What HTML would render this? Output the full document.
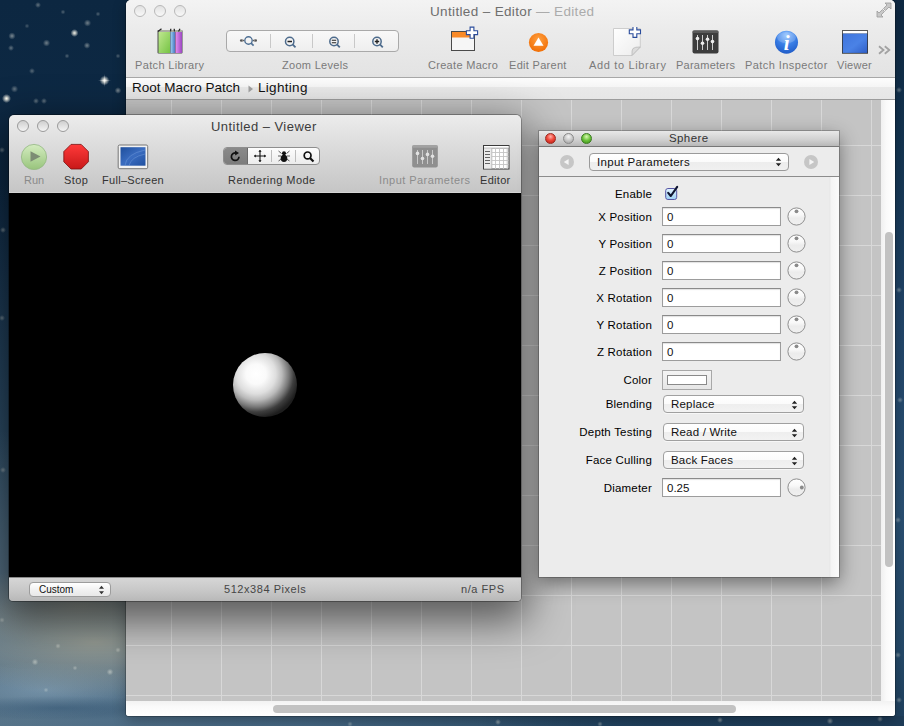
<!DOCTYPE html>
<html><head><meta charset="utf-8">
<style>
*{box-sizing:border-box;margin:0;padding:0}
html,body{width:904px;height:726px;overflow:hidden}
body{position:relative;font-family:"Liberation Sans",sans-serif;
background:#10263e;}
.abs{position:absolute}
#desk{left:0;top:0;width:904px;height:726px;overflow:hidden;
background:
 radial-gradient(ellipse 160px 55px at 95px 642px, rgba(150,155,146,.95), rgba(140,146,140,0) 100%),
 radial-gradient(ellipse 140px 40px at 80px 606px, rgba(140,146,142,.95), rgba(140,146,140,0) 100%),
 radial-gradient(ellipse 130px 12px at 60px 708px, rgba(48,82,112,.55), rgba(48,82,112,0) 100%),
 radial-gradient(ellipse 110px 28px at 45px 690px, rgba(125,155,178,.7), rgba(110,140,165,0) 100%),
 radial-gradient(ellipse 420px 120px at 280px 740px, rgba(72,106,134,1), rgba(60,95,125,0) 100%),
 radial-gradient(ellipse 320px 260px at 30px 690px, rgba(96,122,140,1) 0%, rgba(88,115,135,.95) 45%, rgba(60,92,118,0) 100%),
 radial-gradient(ellipse 70px 420px at -5px 600px, rgba(62,94,118,1), rgba(60,92,115,0) 100%),
 radial-gradient(ellipse 60px 500px at 910px 726px, rgba(52,88,120,1), rgba(50,85,115,0) 100%),
 linear-gradient(180deg,#0c2741 0%,#0e2a46 30%,#12304d 55%,#1b3c5a 80%,#22445f 100%);}
.st{position:absolute}
/* editor window */
#ed{left:126px;top:0px;width:769px;height:716px;background:#fdfdfd;border-radius:5px 5px 3px 3px;
 box-shadow:0 0 0 1px rgba(0,0,0,.22),0 4px 14px rgba(0,0,0,.3);overflow:hidden}
#edtb{left:0;top:0;width:769px;height:78px;background:linear-gradient(#f3f3f3,#ebebeb 40%,#e3e3e3);border-bottom:1px solid #a8a8a8}
#path{left:0;top:78px;width:769px;height:22px;background:linear-gradient(#fdfdfd 0,#f5f5f5 9px,#e9e9e9 9px,#e6e6e6 100%);border-bottom:1px solid #9c9c9c}
#grid{left:0;top:100px;width:755px;height:601px;background-color:#c4c4c4;
 background-image:linear-gradient(90deg,#d8d8d8 0,#d8d8d8 1px,transparent 1px),linear-gradient(180deg,#d8d8d8 0,#d8d8d8 1px,transparent 1px);
 background-size:50px 50px;background-position:45px 45px}
#vtrack{left:755px;top:100px;width:14px;height:601px;background:linear-gradient(90deg,#f0f0f0,#fafafa 40%,#ffffff)}
#vthumb{left:759px;top:232px;width:8px;height:335px;border-radius:4px;background:#c2c2c2}
#htrack{left:0;top:701px;width:769px;height:15px;background:linear-gradient(#f2f2f2,#fafafa 40%,#fff)}
#hthumb{left:147px;top:705px;width:463px;height:8px;border-radius:4px;background:#c2c2c2}
.tl{position:absolute;width:12px;height:12px;border-radius:50%;border:1px solid #b8b8b8;background:linear-gradient(#e2e2e2,#f8f8f8)}
.tl2{position:absolute;width:12px;height:12px;border-radius:50%;border:1px solid #9a9a9a;background:linear-gradient(#cfcfcf,#f4f4f4)}
.vlbl{position:absolute;font-size:11px;color:#333;white-space:nowrap;margin-top:1px}
.ptl{position:absolute;width:11px;height:11px;border-radius:50%;border:1px solid #888}
.plbl{position:absolute;margin-top:1px;right:187px;font-size:11.5px;color:#000;white-space:nowrap;letter-spacing:0.2px;text-align:right}
.tf{position:absolute;left:123px;width:119px;height:19px;border:1px solid #9c9c9c;border-top-color:#8a8a8a;background:#fff;box-shadow:inset 0 1px 1px rgba(0,0,0,.12)}
.tf span{position:absolute;left:4px;top:3px;font-size:11.5px;color:#111}
.pp{position:absolute;left:124px;width:141px;height:18px;border:1px solid #a0a0a0;border-radius:4px;background:linear-gradient(#ffffff,#fbfbfb 48%,#eeeeee 52%,#f2f2f2);box-shadow:0 1px 0 rgba(255,255,255,.6)}
.pp span{position:absolute;left:7px;top:2px;font-size:11.5px;color:#111;white-space:nowrap;letter-spacing:0.2px}
.lbl{position:absolute;font-size:11px;color:#7a7a7a;white-space:nowrap;margin-top:1px}
/* viewer window */
#vw{left:9px;top:115px;width:512px;height:486px;border-radius:5px 5px 4px 4px;overflow:hidden;
 box-shadow:0 0 0 1px rgba(0,0,0,.3),0 14px 40px 6px rgba(0,0,0,.55)}
#vwtb{left:0;top:0;width:512px;height:78px;background:linear-gradient(#ececec,#dcdcdc 40%,#c5c5c5);box-shadow:inset 0 -1px 0 #d4d4d4}
#canvas{left:0;top:78px;width:512px;height:384px;background:#000}
#vwbot{left:0;top:462px;width:512px;height:24px;background:linear-gradient(#d6d6d6,#c6c6c6 60%,#b8b8b8);border-top:1px solid #8a8a8a}
/* panel */
#pn{left:539px;top:131px;width:300px;height:446px;background:#ececec;
 box-shadow:0 0 0 1px rgba(0,0,0,.22),0 6px 18px rgba(0,0,0,.45)}
#pntb{left:0;top:0;width:300px;height:16px;background:linear-gradient(#e8e8e8,#cfcfcf 60%,#b8b8b8);border-bottom:1px solid #777}
#pnbar{left:0;top:16px;width:300px;height:30px;background:#ececec;border-bottom:1px solid #8c8c8c}
#pnscroll{left:290px;top:46px;width:10px;height:400px;background:linear-gradient(90deg,#e6e6e6,#f5f5f5 25%,#fbfbfb)}
</style></head><body>
<div id="desk" class="abs">
<div class="abs" style="left:895px;top:0;width:9px;height:726px;background:linear-gradient(#0e2842 0%,#143552 20%,#22466a 45%,#2a5073 70%,#254a6a 90%,#1f405e 100%)"></div>
<div class="abs" style="left:480px;top:716px;width:424px;height:10px;background:linear-gradient(90deg,rgba(35,62,88,0),#1f3f5c 40%,#1e3c58)"></div>
<div class="st" style="left:99.7px;top:75.7px;width:9.6px;height:9.6px;background:radial-gradient(circle,rgba(255,253,240,1.00) 0,rgba(255,253,240,0.85) 1.1px,rgba(255,253,240,0) 4.8px)"></div>
<div class="st" style="left:1.5px;top:93.9px;width:9.0px;height:9.0px;background:radial-gradient(circle,rgba(255,253,240,1.00) 0,rgba(255,253,240,0.85) 1.0px,rgba(255,253,240,0) 4.5px)"></div>
<div class="st" style="left:70.5px;top:29.1px;width:7.8px;height:7.8px;background:radial-gradient(circle,rgba(255,253,240,0.90) 0,rgba(255,253,240,0.77) 0.9px,rgba(255,253,240,0) 3.9px)"></div>
<div class="st" style="left:8.4px;top:32.4px;width:7.2px;height:7.2px;background:radial-gradient(circle,rgba(255,253,240,0.42) 0,rgba(255,253,240,0.36) 0.8px,rgba(255,253,240,0) 3.6px)"></div>
<div class="st" style="left:43.2px;top:39.4px;width:7.2px;height:7.2px;background:radial-gradient(circle,rgba(255,253,240,0.39) 0,rgba(255,253,240,0.33) 0.8px,rgba(255,253,240,0) 3.6px)"></div>
<div class="st" style="left:84.1px;top:19.4px;width:7.2px;height:7.2px;background:radial-gradient(circle,rgba(255,253,240,0.39) 0,rgba(255,253,240,0.33) 0.8px,rgba(255,253,240,0) 3.6px)"></div>
<div class="st" style="left:83.7px;top:42.2px;width:6.6px;height:6.6px;background:radial-gradient(circle,rgba(255,253,240,0.39) 0,rgba(255,253,240,0.33) 0.8px,rgba(255,253,240,0) 3.3px)"></div>
<div class="st" style="left:114.7px;top:87.3px;width:6.6px;height:6.6px;background:radial-gradient(circle,rgba(255,253,240,0.42) 0,rgba(255,253,240,0.36) 0.8px,rgba(255,253,240,0) 3.3px)"></div>
<div class="st" style="left:10.9px;top:85.4px;width:7.2px;height:7.2px;background:radial-gradient(circle,rgba(255,253,240,0.35) 0,rgba(255,253,240,0.29) 0.8px,rgba(255,253,240,0) 3.6px)"></div>
<div class="st" style="left:35.0px;top:2.0px;width:6.0px;height:6.0px;background:radial-gradient(circle,rgba(255,253,240,0.32) 0,rgba(255,253,240,0.27) 0.7px,rgba(255,253,240,0) 3.0px)"></div>
<div class="st" style="left:8.0px;top:45.0px;width:6.0px;height:6.0px;background:radial-gradient(circle,rgba(255,253,240,0.32) 0,rgba(255,253,240,0.27) 0.7px,rgba(255,253,240,0) 3.0px)"></div>
<div class="st" style="left:29.0px;top:68.0px;width:6.0px;height:6.0px;background:radial-gradient(circle,rgba(255,253,240,0.28) 0,rgba(255,253,240,0.24) 0.7px,rgba(255,253,240,0) 3.0px)"></div>
<div class="st" style="left:41.0px;top:97.5px;width:6.0px;height:6.0px;background:radial-gradient(circle,rgba(255,253,240,0.32) 0,rgba(255,253,240,0.27) 0.7px,rgba(255,253,240,0) 3.0px)"></div>
<div class="st" style="left:33.0px;top:97.5px;width:6.0px;height:6.0px;background:radial-gradient(circle,rgba(255,253,240,0.32) 0,rgba(255,253,240,0.27) 0.7px,rgba(255,253,240,0) 3.0px)"></div>
<div class="st" style="left:64.6px;top:53.6px;width:4.8px;height:4.8px;background:radial-gradient(circle,rgba(255,253,240,0.24) 0,rgba(255,253,240,0.21) 0.6px,rgba(255,253,240,0) 2.4px)"></div>
<div class="st" style="left:95.6px;top:11.6px;width:4.8px;height:4.8px;background:radial-gradient(circle,rgba(255,253,240,0.24) 0,rgba(255,253,240,0.21) 0.6px,rgba(255,253,240,0) 2.4px)"></div>
<div class="st" style="left:115.6px;top:53.6px;width:4.8px;height:4.8px;background:radial-gradient(circle,rgba(255,253,240,0.24) 0,rgba(255,253,240,0.21) 0.6px,rgba(255,253,240,0) 2.4px)"></div>
<div class="st" style="left:24.6px;top:23.6px;width:4.8px;height:4.8px;background:radial-gradient(circle,rgba(255,253,240,0.21) 0,rgba(255,253,240,0.18) 0.6px,rgba(255,253,240,0) 2.4px)"></div>
<div class="st" style="left:60.6px;top:9.6px;width:4.8px;height:4.8px;background:radial-gradient(circle,rgba(255,253,240,0.24) 0,rgba(255,253,240,0.21) 0.6px,rgba(255,253,240,0) 2.4px)"></div>
<div class="st" style="left:-1.0px;top:147.0px;width:6.0px;height:6.0px;background:radial-gradient(circle,rgba(255,253,240,0.32) 0,rgba(255,253,240,0.27) 0.7px,rgba(255,253,240,0) 3.0px)"></div>
<div class="st" style="left:0.0px;top:227.0px;width:6.0px;height:6.0px;background:radial-gradient(circle,rgba(255,253,240,0.35) 0,rgba(255,253,240,0.29) 0.7px,rgba(255,253,240,0) 3.0px)"></div>
<div class="st" style="left:-1.0px;top:315.0px;width:6.0px;height:6.0px;background:radial-gradient(circle,rgba(255,253,240,0.32) 0,rgba(255,253,240,0.27) 0.7px,rgba(255,253,240,0) 3.0px)"></div>
<div class="st" style="left:0.0px;top:467.0px;width:6.0px;height:6.0px;background:radial-gradient(circle,rgba(255,253,240,0.32) 0,rgba(255,253,240,0.27) 0.7px,rgba(255,253,240,0) 3.0px)"></div>
<div class="st" style="left:31.7px;top:658.7px;width:6.6px;height:6.6px;background:radial-gradient(circle,rgba(255,253,240,0.39) 0,rgba(255,253,240,0.33) 0.8px,rgba(255,253,240,0) 3.3px)"></div>
<div class="st" style="left:55.3px;top:643.3px;width:5.4px;height:5.4px;background:radial-gradient(circle,rgba(255,253,240,0.32) 0,rgba(255,253,240,0.27) 0.6px,rgba(255,253,240,0) 2.7px)"></div>
<div class="st" style="left:106.7px;top:668.7px;width:6.6px;height:6.6px;background:radial-gradient(circle,rgba(255,253,240,0.39) 0,rgba(255,253,240,0.33) 0.8px,rgba(255,253,240,0) 3.3px)"></div>
<div class="st" style="left:115.3px;top:647.3px;width:5.4px;height:5.4px;background:radial-gradient(circle,rgba(255,253,240,0.32) 0,rgba(255,253,240,0.27) 0.6px,rgba(255,253,240,0) 2.7px)"></div>
<div class="st" style="left:72.6px;top:665.6px;width:4.8px;height:4.8px;background:radial-gradient(circle,rgba(255,253,240,0.28) 0,rgba(255,253,240,0.24) 0.6px,rgba(255,253,240,0) 2.4px)"></div>
<div class="st" style="left:43.6px;top:687.6px;width:4.8px;height:4.8px;background:radial-gradient(circle,rgba(255,253,240,0.24) 0,rgba(255,253,240,0.21) 0.6px,rgba(255,253,240,0) 2.4px)"></div>
<div class="st" style="left:-0.7px;top:617.3px;width:5.4px;height:5.4px;background:radial-gradient(circle,rgba(255,253,240,0.28) 0,rgba(255,253,240,0.24) 0.6px,rgba(255,253,240,0) 2.7px)"></div>
<div class="st" style="left:896.0px;top:87.0px;width:6.0px;height:6.0px;background:radial-gradient(circle,rgba(255,253,240,0.32) 0,rgba(255,253,240,0.27) 0.7px,rgba(255,253,240,0) 3.0px)"></div>
<div class="st" style="left:896.0px;top:287.0px;width:6.0px;height:6.0px;background:radial-gradient(circle,rgba(255,253,240,0.32) 0,rgba(255,253,240,0.27) 0.7px,rgba(255,253,240,0) 3.0px)"></div>
<div class="st" style="left:897.0px;top:397.0px;width:6.0px;height:6.0px;background:radial-gradient(circle,rgba(255,253,240,0.32) 0,rgba(255,253,240,0.27) 0.7px,rgba(255,253,240,0) 3.0px)"></div>
<div class="st" style="left:895.0px;top:517.0px;width:6.0px;height:6.0px;background:radial-gradient(circle,rgba(255,253,240,0.32) 0,rgba(255,253,240,0.27) 0.7px,rgba(255,253,240,0) 3.0px)"></div>
<div class="st" style="left:895.0px;top:652.0px;width:6.0px;height:6.0px;background:radial-gradient(circle,rgba(255,253,240,0.32) 0,rgba(255,253,240,0.27) 0.7px,rgba(255,253,240,0) 3.0px)"></div>
<div class="st" style="left:896.0px;top:697.0px;width:6.0px;height:6.0px;background:radial-gradient(circle,rgba(255,253,240,0.32) 0,rgba(255,253,240,0.27) 0.7px,rgba(255,253,240,0) 3.0px)"></div>
<div class="st" style="left:495.0px;top:719.0px;width:6.0px;height:6.0px;background:radial-gradient(circle,rgba(255,253,240,0.39) 0,rgba(255,253,240,0.33) 0.7px,rgba(255,253,240,0) 3.0px)"></div>
<div class="st" style="left:717.0px;top:717.0px;width:6.0px;height:6.0px;background:radial-gradient(circle,rgba(255,253,240,0.39) 0,rgba(255,253,240,0.33) 0.7px,rgba(255,253,240,0) 3.0px)"></div>
<div class="st" style="left:826.7px;top:717.7px;width:6.6px;height:6.6px;background:radial-gradient(circle,rgba(255,253,240,0.39) 0,rgba(255,253,240,0.33) 0.8px,rgba(255,253,240,0) 3.3px)"></div>
<div class="st" style="left:877.0px;top:716.0px;width:6.0px;height:6.0px;background:radial-gradient(circle,rgba(255,253,240,0.35) 0,rgba(255,253,240,0.29) 0.7px,rgba(255,253,240,0) 3.0px)"></div>
<div class="st" style="left:597.3px;top:721.3px;width:5.4px;height:5.4px;background:radial-gradient(circle,rgba(255,253,240,0.32) 0,rgba(255,253,240,0.27) 0.6px,rgba(255,253,240,0) 2.7px)"></div>
<div class="st" style="left:347.3px;top:721.3px;width:5.4px;height:5.4px;background:radial-gradient(circle,rgba(255,253,240,0.28) 0,rgba(255,253,240,0.24) 0.6px,rgba(255,253,240,0) 2.7px)"></div>
<div class="abs" style="left:98px;top:80px;width:13px;height:1px;background:linear-gradient(90deg,rgba(255,255,255,0),rgba(255,255,255,.55),rgba(255,255,255,0))"></div><div class="abs" style="left:104px;top:74px;width:1px;height:13px;background:linear-gradient(rgba(255,255,255,0),rgba(255,255,255,.55),rgba(255,255,255,0))"></div>
</div>

<div id="ed" class="abs">
  <div id="edtb" class="abs">
    <div class="tl" style="left:8px;top:5px"></div>
    <div class="tl" style="left:28px;top:5px"></div>
    <div class="tl" style="left:48px;top:5px"></div>
    <div class="abs" style="left:304px;top:4px;font-size:13.5px;color:#6e6e6e;white-space:nowrap;letter-spacing:0.35px">Untitled &ndash; Editor <span style="color:#ababab">&mdash; Edited</span></div>
    <svg class="abs" style="left:750px;top:2px" width="16" height="16" viewBox="0 0 16 16"><g fill="#c8c8c8" stroke="#9a9a9a" stroke-width="0.8"><path d="M15 1 L9 1 L11 3 L7.5 6.5 L9.5 8.5 L13 5 L15 7 Z"/><path d="M1 15 L7 15 L5 13 L8.5 9.5 L6.5 7.5 L3 11 L1 9 Z"/></g></svg>
    <!-- Patch Library -->
    <svg class="abs" style="left:30px;top:28px" width="28" height="27" viewBox="0 0 28 27">
      <defs><linearGradient id="gG" x1="0" x2="1" y1="0" y2="1"><stop offset="0" stop-color="#c0e890"/><stop offset="1" stop-color="#76c444"/></linearGradient>
      <linearGradient id="gB" x1="0" x2="1"><stop offset="0" stop-color="#9cd0f4"/><stop offset="1" stop-color="#4a78c0"/></linearGradient>
      <linearGradient id="gP" x1="0" x2="1"><stop offset="0" stop-color="#e890f0"/><stop offset="1" stop-color="#9a48c0"/></linearGradient></defs>
      <rect x="1.5" y="2" width="25" height="23.5" fill="#4a4a4a" rx="1"/>
      <rect x="2.5" y="2.2" width="23.5" height="1.6" fill="#c4c6b8"/>
      <path d="M2 3.5 L5.5 0.8 M14.5 3.5 L14.8 0.8 M18.5 3.5 L18.2 0.8 M22.5 3.5 L24 0.8" stroke="#2a2a2a" stroke-width="1.3"/>
      <rect x="2.5" y="4" width="11.5" height="21" fill="url(#gG)"/>
      <rect x="14.5" y="4" width="4.5" height="21" fill="url(#gB)"/>
      <rect x="19.5" y="4" width="6.5" height="21" fill="url(#gP)"/>
    </svg>
    <div class="lbl" style="left:9px;top:58px;letter-spacing:0.35px">Patch Library</div>
    <!-- zoom segmented -->
    <div class="abs" style="left:100px;top:30px;width:173px;height:22px;border:1px solid #a9a9a9;border-radius:4px;background:linear-gradient(#f8f8f8,#eeeeee)">
      <div class="abs" style="left:43px;top:3px;width:1px;height:14px;background:#c8c8c8"></div>
      <div class="abs" style="left:85px;top:3px;width:1px;height:14px;background:#c8c8c8"></div>
      <div class="abs" style="left:127px;top:3px;width:1px;height:14px;background:#c8c8c8"></div>
      <svg class="abs" style="left:11px;top:2px" width="22" height="16" viewBox="0 0 22 16"><circle cx="10.5" cy="7.5" r="3.7" fill="none" stroke="#4f7094" stroke-width="1.4"/><path d="M13.1 10.1 L15.6 12.6" stroke="#4f7094" stroke-width="1.7"/><circle cx="3.2" cy="7.5" r="1.2" fill="#555"/><circle cx="17.8" cy="7.5" r="1.2" fill="#555"/><path d="M4.5 6 L6.3 7.5 L4.5 9 Z M16.5 6 L14.7 7.5 L16.5 9 Z" fill="#555"/></svg>
      <svg class="abs" style="left:54px;top:3px" width="22" height="16" viewBox="0 0 22 16"><circle cx="8.7" cy="7.5" r="4.2" fill="none" stroke="#4d6b8c" stroke-width="1.5"/><path d="M11.6 10.4 L14.5 13.3" stroke="#4d6b8c" stroke-width="1.8"/><path d="M6.5 7.5 L11 7.5" stroke="#222" stroke-width="1.5"/></svg>
      <svg class="abs" style="left:98px;top:3px" width="22" height="16" viewBox="0 0 22 16"><circle cx="9" cy="7.5" r="4.2" fill="none" stroke="#4d6b8c" stroke-width="1.5"/><path d="M11.9 10.4 L14.8 13.3" stroke="#4d6b8c" stroke-width="1.8"/><path d="M6.8 6.3 L11.2 6.3 M6.8 8.7 L11.2 8.7" stroke="#222" stroke-width="1.1"/></svg>
      <svg class="abs" style="left:141px;top:3px" width="22" height="16" viewBox="0 0 22 16"><circle cx="9" cy="7.5" r="4.2" fill="none" stroke="#4d6b8c" stroke-width="1.5"/><path d="M11.9 10.4 L14.8 13.3" stroke="#4d6b8c" stroke-width="1.8"/><path d="M6.8 7.5 L11.2 7.5 M9 5.3 L9 9.7" stroke="#222" stroke-width="1.4"/></svg>
    </div>
    <div class="lbl" style="left:156px;top:58px;letter-spacing:0.3px">Zoom Levels</div>
    <!-- Create Macro -->
    <svg class="abs" style="left:324px;top:26px" width="30" height="26" viewBox="0 0 30 26">
      <rect x="1.5" y="5.5" width="23" height="19" fill="#f6f6f6" stroke="#4a4a4a" stroke-width="1"/>
      <rect x="2" y="6" width="22" height="5.5" fill="#f98a28"/>
      <path d="M20.10 1.10 h3.80 v3.70 h3.70 v3.80 h-3.70 v3.70 h-3.80 v-3.70 h-3.70 v-3.80 h3.70 z" fill="#fff" stroke="#2a4c9c" stroke-width="1.1"/>
    </svg>
    <div class="lbl" style="left:302px;top:58px;letter-spacing:0.3px">Create Macro</div>
    <!-- Edit Parent -->
    <svg class="abs" style="left:401px;top:32px" width="22" height="22" viewBox="0 0 22 22">
      <defs><radialGradient id="gO" cx="0.5" cy="0.35" r="0.7"><stop offset="0" stop-color="#ffa040"/><stop offset="1" stop-color="#f06a00"/></radialGradient></defs>
      <circle cx="11.5" cy="10.5" r="9.6" fill="url(#gO)"/>
      <path d="M11.5 5.5 L16.5 13.8 L6.5 13.8 Z" fill="#fff"/>
    </svg>
    <div class="lbl" style="left:383px;top:58px;letter-spacing:0.3px">Edit Parent</div>
    <!-- Add to Library -->
    <svg class="abs" style="left:486px;top:27px" width="30" height="30" viewBox="0 0 30 30">
      <defs><linearGradient id="gPg" x1="0" y1="0" x2="1" y2="1"><stop offset="0" stop-color="#ffffff"/><stop offset="1" stop-color="#ececec"/></linearGradient></defs>
      <path d="M1.5 1.5 L28.3 1.5 L28.3 20 L20 28.5 L1.5 28.5 Z" fill="url(#gPg)" stroke="#cdcdcd" stroke-width="1"/>
      <path d="M28.3 20 L20 28.5 Q19.6 23 21 21.5 Q23 19.8 28.3 20 Z" fill="#dcdcdc" stroke="#b8b8b8" stroke-width="0.8"/>
      <path d="M21.00 -0.80 h3.80 v3.70 h3.70 v3.80 h-3.70 v3.70 h-3.80 v-3.70 h-3.70 v-3.80 h3.70 z" fill="#fff" stroke="#2a4c9c" stroke-width="1.1"/>
    </svg>
    <div class="lbl" style="left:463px;top:58px;letter-spacing:0.65px">Add to Library</div>
    <!-- Parameters -->
    <svg class="abs" style="left:566px;top:30px" width="27" height="24" viewBox="0 0 27 24">
      <rect x="0.5" y="0.5" width="26" height="23" rx="2" fill="#3d3d3d"/>
      <rect x="0.5" y="0.5" width="26" height="2.5" rx="1" fill="#5a5a5a"/>
      <path d="M5.5 5 V20 M10.5 5 V20 M15.5 5 V20 M20.5 5 V20" stroke="#cfcfcf" stroke-width="1"/>
      <circle cx="5.5" cy="8.6" r="1.8" fill="#eee"/><circle cx="10.5" cy="13.2" r="1.8" fill="#eee"/><circle cx="15.5" cy="9.3" r="1.8" fill="#eee"/><circle cx="20.5" cy="11.6" r="1.8" fill="#eee"/>
    </svg>
    <div class="lbl" style="left:550px;top:58px;letter-spacing:0.25px">Parameters</div>
    <!-- Patch Inspector -->
    <svg class="abs" style="left:648px;top:30px" width="25" height="26" viewBox="0 0 25 26">
      <defs><radialGradient id="gI" cx="0.5" cy="0.2" r="0.85"><stop offset="0" stop-color="#8ec0ff"/><stop offset="0.5" stop-color="#3a7fe6"/><stop offset="1" stop-color="#1d58c4"/></radialGradient></defs>
      <circle cx="12.5" cy="12.2" r="11.5" fill="url(#gI)"/>
      <ellipse cx="12.5" cy="7.5" rx="9.5" ry="5.5" fill="#fff" opacity="0.18"/>
      <text x="12.6" y="19.6" text-anchor="middle" font-family="Liberation Serif" font-style="italic" font-weight="bold" font-size="21" fill="#fff">i</text>
    </svg>
    <div class="lbl" style="left:619px;top:58px;letter-spacing:0.42px">Patch Inspector</div>
    <!-- Viewer -->
    <svg class="abs" style="left:715px;top:29px" width="28" height="26" viewBox="0 0 28 26">
      <defs><linearGradient id="gV" x1="0" y1="0" x2="1" y2="1"><stop offset="0" stop-color="#3f74dc"/><stop offset="0.55" stop-color="#4a82e6"/><stop offset="1" stop-color="#2f5fc8"/></linearGradient></defs>
      <rect x="1" y="1.2" width="26" height="23.5" fill="#333"/>
      <rect x="1.8" y="2" width="24.4" height="2.6" fill="#fff"/>
      <rect x="1.8" y="4.6" width="24.4" height="19.3" fill="url(#gV)"/>
    </svg>
    <div class="lbl" style="left:711px;top:58px;letter-spacing:0.25px">Viewer</div>
    <svg class="abs" style="left:752px;top:45px" width="14" height="11" viewBox="0 0 14 11"><path d="M1 1.2 L5.5 5 L1 8.8 M6.8 1.2 L11.3 5 L6.8 8.8" fill="none" stroke="#a2a2a2" stroke-width="1.8"/></svg>
  </div>
  <div id="path" class="abs">
    <div class="abs" style="left:6px;top:2px;font-size:13.5px;color:#111;white-space:nowrap;letter-spacing:0px">Root Macro Patch</div>
    <svg class="abs" style="left:121px;top:6px" width="8" height="10" viewBox="0 0 8 10"><path d="M1.5 1.5 L6 5 L1.5 8.5 Z" fill="#a0a0a0"/></svg>
    <div class="abs" style="left:132px;top:2px;font-size:13.5px;color:#111;white-space:nowrap;letter-spacing:0.3px">Lighting</div>
  </div>
  <div id="grid" class="abs"></div>
  <div id="vtrack" class="abs"></div>
  <div id="vthumb" class="abs"></div>
  <div id="htrack" class="abs"></div>
  <div id="hthumb" class="abs"></div>
</div>

<div id="vw" class="abs">
  <div id="vwtb" class="abs">
    <div class="tl2" style="left:8px;top:5px"></div>
    <div class="tl2" style="left:28px;top:5px"></div>
    <div class="tl2" style="left:48px;top:5px"></div>
    <div class="abs" style="left:202px;top:4px;font-size:13px;color:#3c3c3c;white-space:nowrap;letter-spacing:0.45px">Untitled &ndash; Viewer</div>
    <!-- Run -->
    <svg class="abs" style="left:11px;top:28px" width="28" height="28" viewBox="0 0 28 28">
      <defs><linearGradient id="gR" x1="0" y1="0" x2="0" y2="1"><stop offset="0" stop-color="#d4ecc0"/><stop offset="1" stop-color="#98c47c"/></linearGradient></defs>
      <circle cx="14" cy="14" r="12.6" fill="url(#gR)" stroke="#94b884" stroke-width="0.8"/>
      <path d="M10.5 8.2 L20.5 13.5 L10.5 18.8 Z" fill="#7c8c74"/>
    </svg>
    <div class="abs vlbl" style="left:15px;top:58px;color:#8a8a8a">Run</div>
    <!-- Stop -->
    <svg class="abs" style="left:53px;top:28px" width="28" height="28" viewBox="0 0 28 28">
      <defs><linearGradient id="gS" x1="0" y1="0" x2="0" y2="1"><stop offset="0" stop-color="#ff3a3a"/><stop offset="1" stop-color="#c81818"/></linearGradient></defs>
      <path d="M9 1.4 L19.2 1.4 L26.4 8.6 L26.4 18.8 L19.2 26 L9 26 L1.8 18.8 L1.8 8.6 Z" fill="url(#gS)" stroke="#7a1010" stroke-width="0.8"/>
    </svg>
    <div class="abs vlbl" style="left:55px;top:58px;letter-spacing:0.4px">Stop</div>
    <!-- Full-screen -->
    <svg class="abs" style="left:108px;top:29px" width="32" height="26" viewBox="0 0 32 26">
      <defs><linearGradient id="gF" x1="0" y1="0" x2="1" y2="1"><stop offset="0" stop-color="#1f4f9c"/><stop offset="0.5" stop-color="#3a6cc0"/><stop offset="1" stop-color="#2050a0"/></linearGradient></defs>
      <rect x="1.2" y="1" width="29.5" height="23.7" rx="1.5" fill="#f2f2f2" stroke="#6a6a6a" stroke-width="0.9"/>
      <rect x="3.5" y="3.2" width="25" height="18.5" fill="url(#gF)"/>
      <path d="M8 21.5 Q9 10 28 6 M12 21.5 Q14 13 28 10" stroke="#7aa4e0" stroke-width="0.6" fill="none" opacity="0.7"/>
    </svg>
    <div class="abs vlbl" style="left:93px;top:58px;letter-spacing:0.3px">Full&#8211;Screen</div>
    <!-- rendering mode -->
    <div class="abs" style="left:214px;top:32px;width:97px;height:18px;border:1px solid #8e8e8e;border-radius:4px;background:linear-gradient(#fdfdfd,#ececec);overflow:hidden">
      <div class="abs" style="left:0;top:0;width:24px;height:16px;background:linear-gradient(#8a8a8a,#7c7c7c);border-right:1px solid #6a6a6a"></div>
      <div class="abs" style="left:47px;top:2px;width:1px;height:12px;background:#bdbdbd"></div>
      <div class="abs" style="left:71px;top:2px;width:1px;height:12px;background:#bdbdbd"></div>
      <svg class="abs" style="left:5px;top:2px" width="13" height="13" viewBox="0 0 13 13"><path d="M10 6.8 A3.8 3.8 0 1 1 7.2 3" fill="none" stroke="#111" stroke-width="1.7"/><path d="M6 0.6 L10 3 L6.2 5.6 Z" fill="#111"/></svg>
      <svg class="abs" style="left:29px;top:1px" width="14" height="14" viewBox="0 0 14 14"><path d="M7 1.5 V12.5 M1.5 7 H12.5" stroke="#111" stroke-width="1.1"/><path d="M7 0.8 L8.6 2.8 H5.4 Z M7 13.2 L8.6 11.2 H5.4 Z M0.8 7 L2.8 5.4 V8.6 Z M13.2 7 L11.2 5.4 V8.6 Z" fill="#111"/></svg>
      <svg class="abs" style="left:53px;top:1px" width="14" height="14" viewBox="0 0 14 14"><ellipse cx="7" cy="9.3" rx="3.3" ry="3.6" fill="#111"/><circle cx="7" cy="4.3" r="2" fill="#111"/><path d="M1.5 2 L4.5 4.5 M12.5 2 L9.5 4.5 M1 7 H4 M13 7 H10 M1.5 12 L4.3 10 M12.5 12 L9.7 10" stroke="#333" stroke-width="0.8"/></svg>
      <svg class="abs" style="left:78px;top:2px" width="14" height="13" viewBox="0 0 14 13"><circle cx="5.6" cy="5.4" r="3.4" fill="none" stroke="#111" stroke-width="1.7"/><path d="M8 8 L11.5 11.5" stroke="#111" stroke-width="2.2"/></svg>
    </div>
    <div class="abs vlbl" style="left:219px;top:58px;letter-spacing:0.45px">Rendering Mode</div>
    <!-- Input Parameters disabled -->
    <svg class="abs" style="left:403px;top:30px" width="26" height="23" viewBox="0 0 26 23">
      <rect x="0.2" y="0.2" width="25.6" height="22.4" rx="2" fill="#8f8f8f"/>
      <rect x="0.2" y="0.2" width="25.6" height="2.5" rx="1" fill="#a2a2a2"/>
      <path d="M5.5 5 V19 M10.5 5 V19 M15.5 5 V19 M20.5 5 V19" stroke="#c9c9c9" stroke-width="1"/>
      <circle cx="5.5" cy="8.4" r="1.8" fill="#e2e2e2"/><circle cx="10.5" cy="13.5" r="1.8" fill="#e2e2e2"/><circle cx="15.5" cy="9.4" r="1.8" fill="#e2e2e2"/><circle cx="20.5" cy="11.2" r="1.8" fill="#e2e2e2"/>
    </svg>
    <div class="abs vlbl" style="left:370px;top:58px;color:#8c8c8c;letter-spacing:0.45px">Input Parameters</div>
    <!-- Editor icon -->
    <svg class="abs" style="left:474px;top:30px" width="27" height="25" viewBox="0 0 27 25">
      <rect x="0.5" y="0.5" width="25.5" height="23.5" fill="#fff" stroke="#3a3a3a" stroke-width="1"/>
      <rect x="1" y="1" width="24.5" height="2" fill="#fff"/>
      <path d="M1 3.2 H25.5" stroke="#888" stroke-width="0.8"/>
      <rect x="1" y="3.5" width="7.5" height="20" fill="#eaeaea"/>
      <path d="M2 6.5 H7 M2 9.5 H7 M2 12.5 H7 M2 15.5 H7 M2 18.5 H7" stroke="#555" stroke-width="0.9"/>
      <path d="M8.8 3.5 V24" stroke="#aaa" stroke-width="0.8"/>
      <g stroke="#c4c4c4" stroke-width="0.9"><path d="M12.5 3.5 V24 M16.5 3.5 V24 M20.5 3.5 V24 M24.2 3.5 V24"/><path d="M9 7.5 H25.5 M9 11.5 H25.5 M9 15.5 H25.5 M9 19.5 H25.5"/></g>
    </svg>
    <div class="abs vlbl" style="left:471px;top:58px;letter-spacing:0.3px">Editor</div>
  </div>
  <div id="canvas" class="abs">
    <div class="abs" style="left:224px;top:160px;width:64px;height:64px;border-radius:50%;
      background:radial-gradient(circle 44px at 36% 33%, #ffffff 0%, #fafafa 23%, #dedede 45%, #bababa 59%, #767676 75%, #3e3e3e 86%, #1e1e1e 100%)"></div>
  </div>
  <div id="vwbot" class="abs">
    <div class="abs" style="left:20px;top:4px;width:82px;height:15px;border:1px solid #9c9c9c;border-radius:4px;background:linear-gradient(#ffffff,#f2f2f2 50%,#e8e8e8)">
      <div class="abs" style="left:9px;top:1px;font-size:10px;color:#111;letter-spacing:0px">Custom</div>
      <svg class="abs" style="left:68px;top:2px" width="7" height="10" viewBox="0 0 7 10"><path d="M3.5 0.8 L6 3.8 H1 Z M3.5 9.2 L6 6.2 H1 Z" fill="#333"/></svg>
    </div>
    <div class="abs" style="left:215px;top:5px;font-size:11px;color:#464646;letter-spacing:0.55px">512x384 Pixels</div>
    <div class="abs" style="left:452px;top:5px;font-size:11px;color:#464646;letter-spacing:0.55px">n/a FPS</div>
  </div>
</div>

<div id="pn" class="abs">
  <div id="pntb" class="abs">
    <div class="ptl" style="left:6px;top:2px;background:radial-gradient(circle at 50% 30%,#ffb0a8 0%,#f04a3c 45%,#b81810 100%);border-color:#9a2a20"></div>
    <div class="ptl" style="left:24px;top:2px;background:radial-gradient(circle at 50% 30%,#f4f4f4 0%,#c8c8c8 50%,#9a9a9a 100%);border-color:#8a8a8a"></div>
    <div class="ptl" style="left:42px;top:2px;background:radial-gradient(circle at 50% 30%,#d8f8b0 0%,#6ac23a 50%,#3a8a18 100%);border-color:#3a7a20"></div>
    <div class="abs" style="left:130px;top:1px;font-size:11.5px;color:#333;letter-spacing:0.4px">Sphere</div>
  </div>
  <div id="pnbar" class="abs">
    <svg class="abs" style="left:20px;top:7px" width="16" height="16" viewBox="0 0 16 16"><circle cx="8" cy="8" r="7" fill="#c6c6c6"/><path d="M4.8 8 L9.6 5 L9.6 11 Z" fill="#f4f4f4"/></svg>
    <svg class="abs" style="left:264px;top:7px" width="16" height="16" viewBox="0 0 16 16"><circle cx="8" cy="8" r="7" fill="#c6c6c6"/><path d="M11.2 8 L6.4 5 L6.4 11 Z" fill="#f4f4f4"/></svg>
    <div class="abs" style="left:50px;top:6px;width:200px;height:18px;border:1px solid #9a9a9a;border-radius:4px;background:linear-gradient(#ffffff,#fbfbfb 50%,#ededed 52%,#f0f0f0)">
      <div class="abs" style="left:7px;top:2px;font-size:11.5px;color:#111;letter-spacing:0.3px;white-space:nowrap">Input Parameters</div>
      <svg class="abs" style="left:185px;top:3px" width="7" height="10" viewBox="0 0 7 10"><path d="M3.5 0.8 L6.2 3.8 H0.8 Z M3.5 9.2 L6.2 6.2 H0.8 Z" fill="#222"/></svg>
    </div>
  </div>
  <div id="pnscroll" class="abs"></div>
<div class="plbl" style="top:56px">Enable</div>
<svg class="abs" style="left:126px;top:54px" width="16" height="16" viewBox="0 0 16 16">
 <defs><linearGradient id="gCk" x1="0" y1="0" x2="0" y2="1"><stop offset="0" stop-color="#e4f4ff"/><stop offset="1" stop-color="#9ccff4"/></linearGradient></defs>
 <rect x="0.7" y="3.5" width="11" height="11" rx="2.2" fill="url(#gCk)" stroke="#5656a6" stroke-width="1"/>
 <path d="M3.2 7.8 L5.8 11 L12.2 1.8" fill="none" stroke="#0e1430" stroke-width="2.1" stroke-linecap="round" stroke-linejoin="round"/></svg>
<div class="plbl" style="top:79px">X Position</div>
<div class="tf" style="top:76px"><span>0</span></div>
<svg class="abs" style="left:248px;top:75.5px" width="19" height="19" viewBox="0 0 19 19">
 <defs><linearGradient id="gK216" x1="0" y1="0" x2="0" y2="1"><stop offset="0" stop-color="#ffffff"/><stop offset="0.4" stop-color="#f8f8f8"/><stop offset="0.6" stop-color="#ececec"/><stop offset="1" stop-color="#f0f0f0"/></linearGradient></defs>
 <circle cx="9.5" cy="9.5" r="8.6" fill="url(#gK216)" stroke="#8e8e8e" stroke-width="1"/><circle cx="9.5" cy="4.3" r="1.9" fill="#8a8a8a"/></svg>
<div class="plbl" style="top:106px">Y Position</div>
<div class="tf" style="top:103px"><span>0</span></div>
<svg class="abs" style="left:248px;top:102.5px" width="19" height="19" viewBox="0 0 19 19">
 <defs><linearGradient id="gK243" x1="0" y1="0" x2="0" y2="1"><stop offset="0" stop-color="#ffffff"/><stop offset="0.4" stop-color="#f8f8f8"/><stop offset="0.6" stop-color="#ececec"/><stop offset="1" stop-color="#f0f0f0"/></linearGradient></defs>
 <circle cx="9.5" cy="9.5" r="8.6" fill="url(#gK243)" stroke="#8e8e8e" stroke-width="1"/><circle cx="9.5" cy="4.3" r="1.9" fill="#8a8a8a"/></svg>
<div class="plbl" style="top:133px">Z Position</div>
<div class="tf" style="top:130px"><span>0</span></div>
<svg class="abs" style="left:248px;top:129.5px" width="19" height="19" viewBox="0 0 19 19">
 <defs><linearGradient id="gK270" x1="0" y1="0" x2="0" y2="1"><stop offset="0" stop-color="#ffffff"/><stop offset="0.4" stop-color="#f8f8f8"/><stop offset="0.6" stop-color="#ececec"/><stop offset="1" stop-color="#f0f0f0"/></linearGradient></defs>
 <circle cx="9.5" cy="9.5" r="8.6" fill="url(#gK270)" stroke="#8e8e8e" stroke-width="1"/><circle cx="9.5" cy="4.3" r="1.9" fill="#8a8a8a"/></svg>
<div class="plbl" style="top:160px">X Rotation</div>
<div class="tf" style="top:157px"><span>0</span></div>
<svg class="abs" style="left:248px;top:156.5px" width="19" height="19" viewBox="0 0 19 19">
 <defs><linearGradient id="gK297" x1="0" y1="0" x2="0" y2="1"><stop offset="0" stop-color="#ffffff"/><stop offset="0.4" stop-color="#f8f8f8"/><stop offset="0.6" stop-color="#ececec"/><stop offset="1" stop-color="#f0f0f0"/></linearGradient></defs>
 <circle cx="9.5" cy="9.5" r="8.6" fill="url(#gK297)" stroke="#8e8e8e" stroke-width="1"/><circle cx="9.5" cy="4.3" r="1.9" fill="#8a8a8a"/></svg>
<div class="plbl" style="top:187px">Y Rotation</div>
<div class="tf" style="top:184px"><span>0</span></div>
<svg class="abs" style="left:248px;top:183.5px" width="19" height="19" viewBox="0 0 19 19">
 <defs><linearGradient id="gK324" x1="0" y1="0" x2="0" y2="1"><stop offset="0" stop-color="#ffffff"/><stop offset="0.4" stop-color="#f8f8f8"/><stop offset="0.6" stop-color="#ececec"/><stop offset="1" stop-color="#f0f0f0"/></linearGradient></defs>
 <circle cx="9.5" cy="9.5" r="8.6" fill="url(#gK324)" stroke="#8e8e8e" stroke-width="1"/><circle cx="9.5" cy="4.3" r="1.9" fill="#8a8a8a"/></svg>
<div class="plbl" style="top:214px">Z Rotation</div>
<div class="tf" style="top:211px"><span>0</span></div>
<svg class="abs" style="left:248px;top:210.5px" width="19" height="19" viewBox="0 0 19 19">
 <defs><linearGradient id="gK351" x1="0" y1="0" x2="0" y2="1"><stop offset="0" stop-color="#ffffff"/><stop offset="0.4" stop-color="#f8f8f8"/><stop offset="0.6" stop-color="#ececec"/><stop offset="1" stop-color="#f0f0f0"/></linearGradient></defs>
 <circle cx="9.5" cy="9.5" r="8.6" fill="url(#gK351)" stroke="#8e8e8e" stroke-width="1"/><circle cx="9.5" cy="4.3" r="1.9" fill="#8a8a8a"/></svg>
<div class="plbl" style="top:242px">Color</div>
<div class="abs" style="left:123px;top:239px;width:50px;height:20px;border:1px solid #a8a8a8;background:linear-gradient(#f4f4f4,#e6e6e6)"><div class="abs" style="left:4px;top:4px;width:40px;height:10px;border:1px solid #8a8a8a;background:#fff"></div></div>
<div class="plbl" style="top:266px">Blending</div>
<div class="pp" style="top:264px"><span>Replace</span><svg class="abs" style="left:127px;top:4px" width="7" height="10" viewBox="0 0 7 10"><path d="M3.5 0.8 L6.2 3.8 H0.8 Z M3.5 9.2 L6.2 6.2 H0.8 Z" fill="#222"/></svg></div>
<div class="plbl" style="top:294px">Depth Testing</div>
<div class="pp" style="top:292px"><span>Read / Write</span><svg class="abs" style="left:127px;top:4px" width="7" height="10" viewBox="0 0 7 10"><path d="M3.5 0.8 L6.2 3.8 H0.8 Z M3.5 9.2 L6.2 6.2 H0.8 Z" fill="#222"/></svg></div>
<div class="plbl" style="top:322px">Face Culling</div>
<div class="pp" style="top:320px"><span>Back Faces</span><svg class="abs" style="left:127px;top:4px" width="7" height="10" viewBox="0 0 7 10"><path d="M3.5 0.8 L6.2 3.8 H0.8 Z M3.5 9.2 L6.2 6.2 H0.8 Z" fill="#222"/></svg></div>
<div class="plbl" style="top:350px">Diameter</div>
<div class="tf" style="top:347px"><span>0.25</span></div>
<svg class="abs" style="left:248px;top:346.5px" width="19" height="19" viewBox="0 0 19 19">
 <defs><linearGradient id="gK487" x1="0" y1="0" x2="0" y2="1"><stop offset="0" stop-color="#ffffff"/><stop offset="0.4" stop-color="#f8f8f8"/><stop offset="0.6" stop-color="#ececec"/><stop offset="1" stop-color="#f0f0f0"/></linearGradient></defs>
 <circle cx="9.5" cy="9.5" r="8.6" fill="url(#gK487)" stroke="#8e8e8e" stroke-width="1"/><circle cx="14.8" cy="9.5" r="1.9" fill="#8a8a8a"/></svg>
</div>
</body></html>
